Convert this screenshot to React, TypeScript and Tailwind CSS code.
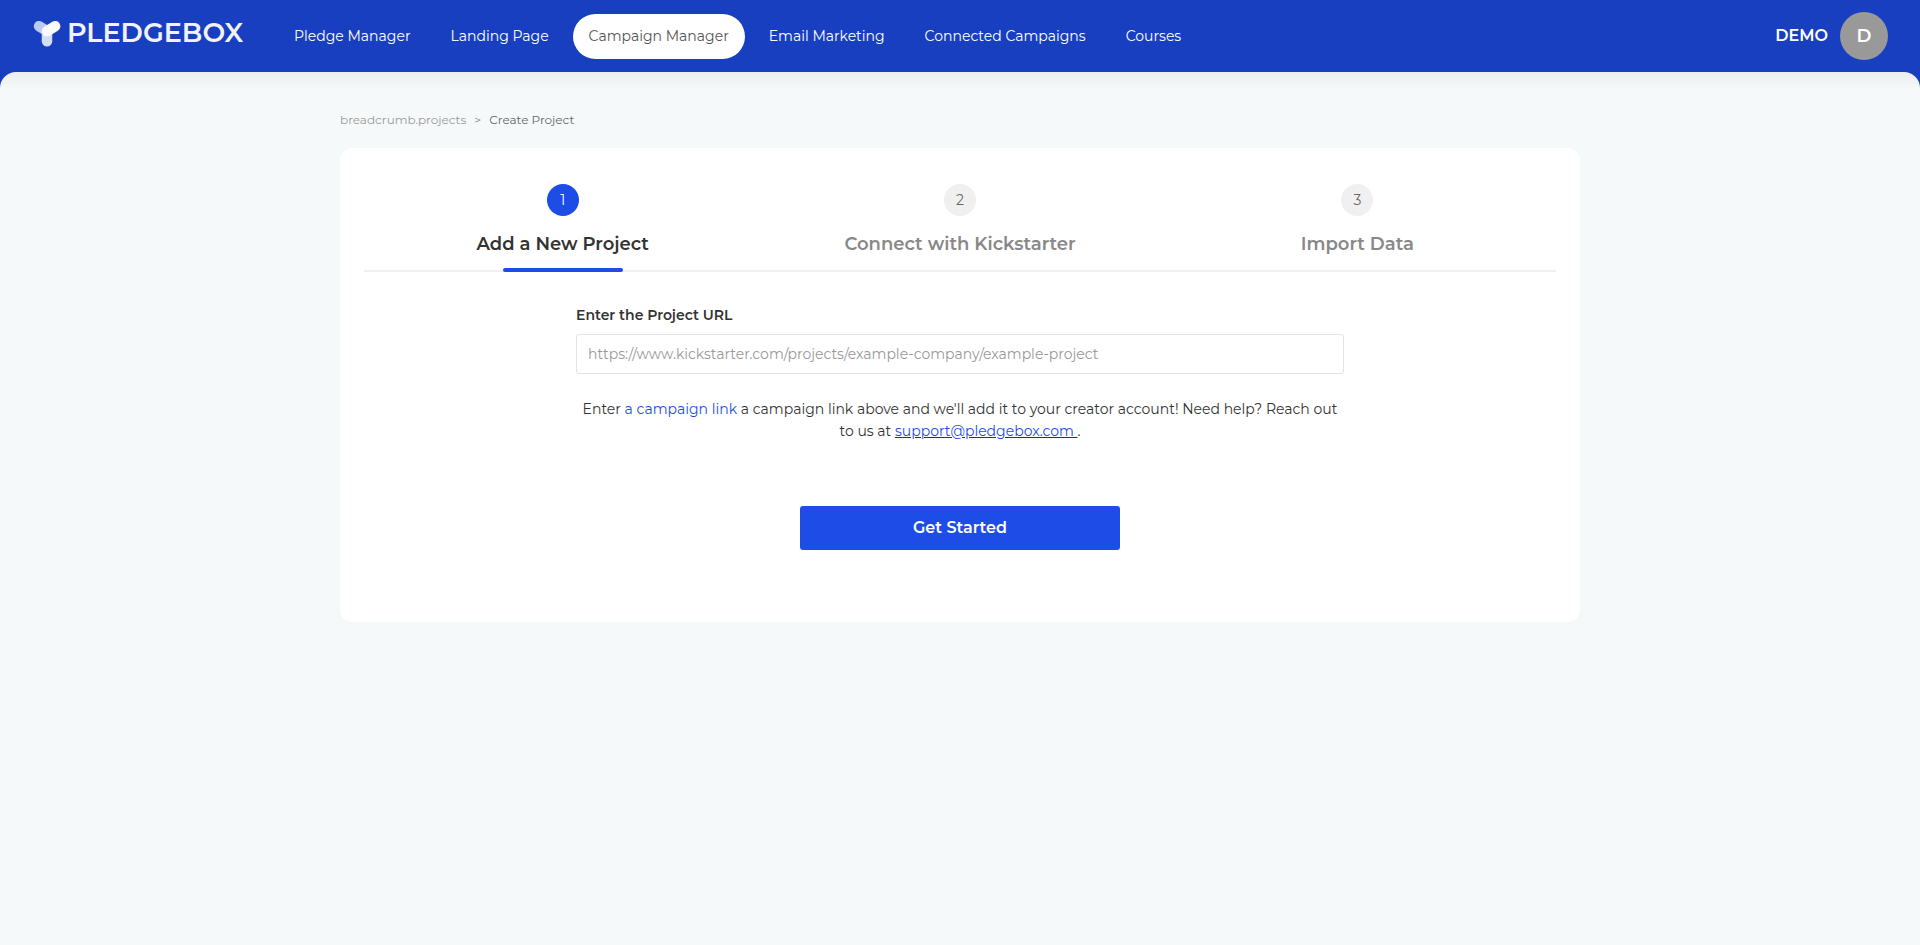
import { useState } from "react";
import clsx from "clsx";

const navItems = [
  "Pledge Manager",
  "Landing Page",
  "Campaign Manager",
  "Email Marketing",
  "Connected Campaigns",
  "Courses",
];

const steps = ["Add a New Project", "Connect with Kickstarter", "Import Data"];

const Logo = () => (
  <a href="#" aria-label="PledgeBox" className="flex h-[66px] w-[245px] shrink-0 items-center gap-1.5 self-start">
    <svg width="28" height="27" viewBox="0 0 28 27" fill="none" strokeLinecap="round" strokeWidth="10.5">
      <path d="M14 11.5V21.2" stroke="#d3ddf6" />
      <path d="M6.1 6.2L14 11" stroke="#bccbf3" />
      <path d="M14 11.2L22.1 6.2" stroke="#fafaf8" />
    </svg>
    <span className="text-[27px] leading-8 font-semibold text-[#f1f3fa]">PLEDGEBOX</span>
  </a>
);

const Header = () => (
  <header className="flex h-[72px] items-center pr-8 pl-[33px]">
    <Logo />
    <nav className="flex flex-1 gap-2">
      {navItems.map((item) => (
        <a
          key={item}
          href="#"
          className={clsx(
            "flex h-[45px] shrink-0 items-center justify-center rounded-full px-4 text-sm whitespace-nowrap",
            item === "Campaign Manager" ? "bg-white text-[#555555]" : "text-white"
          )}
        >
          {item}
        </a>
      ))}
    </nav>
    <button type="button" className="flex items-center gap-3 font-semibold text-white">
      <span className="text-base">DEMO</span>
      <span className="flex size-12 items-center justify-center rounded-full bg-[#999999] text-lg">D</span>
    </button>
  </header>
);

const Steps = ({ current }: { current: number }) => (
  <ol className="grid grid-cols-3 border-b-2 border-[#f0f0f0]">
    {steps.map((step, index) => (
      <li key={step} className="-mb-0.5 flex flex-col items-center">
        <span
          className={clsx(
            "flex size-8 items-center justify-center rounded-full text-sm",
            index === current ? "bg-[#1d4de6] text-white" : "bg-[#f0f0f0] text-[#666666]"
          )}
        >
          {index + 1}
        </span>
        <span
          className={clsx(
            "mt-4 mb-3 text-lg leading-6 font-semibold",
            index === current ? "text-[#333333]" : "text-[#888888]"
          )}
        >
          {step}
        </span>
        <span className={clsx("h-1 w-[120px] rounded-full", index === current && "bg-[#1d4de6]")} />
      </li>
    ))}
  </ol>
);

const ProjectForm = () => {
  const [url, setUrl] = useState("");

  return (
    <form onSubmit={(e) => e.preventDefault()} className="mx-auto mt-8 flex w-full max-w-[768px] flex-col">
      <label htmlFor="project-url" className="text-sm leading-[22px] font-semibold text-[#333333]">
        Enter the Project URL
      </label>
      <input
        id="project-url"
        type="text"
        placeholder="https://www.kickstarter.com/projects/example-company/example-project"
        value={url}
        onChange={(e) => setUrl(e.target.value)}
        className="mt-2 h-10 w-full rounded-[3px] border border-[#e3e3e6] px-[11px] text-sm outline-none placeholder:text-[#999999]"
      />
      <p className="mt-6 text-center text-sm leading-[22px] text-[#333333]">
        Enter <a href="#" className="text-[#1d4de6]">a campaign link</a> a campaign link above and we'll add it to
        your creator account! Need help? Reach out to us at{" "}
        <a href="mailto:support@pledgebox.com" className="text-[#1d4de6] underline decoration-[#333333]">
          support@pledgebox.com&nbsp;
        </a>
        .
      </p>
      <button
        type="submit"
        className="mx-auto mt-16 h-11 w-80 rounded-[3px] bg-[#1d4de6] text-base font-semibold text-white"
      >
        Get Started
      </button>
    </form>
  );
};

const App = () => {
  return (
    <div className="flex min-h-screen flex-col bg-[#183fbf] font-[Montserrat,Inter,sans-serif]">
      <Header />
      <main className="flex-1 rounded-t-2xl bg-[#f5f9fa] bg-[linear-gradient(#eceef0,#f5f9fa_18px)] px-6 pb-12">
        <div className="mx-auto max-w-[1240px]">
          <div className="flex gap-2 pt-9 pb-4 text-xs leading-6">
            <a href="#" className="text-[#999999]">breadcrumb.projects</a>
            <span className="text-[#888888]">&gt;</span>
            <span className="text-[#666666]">Create Project</span>
          </div>
          <section className="rounded-xl bg-white px-6 pt-9 pb-[72px]">
            <Steps current={0} />
            <ProjectForm />
          </section>
        </div>
      </main>
    </div>
  );
};

export default App;
